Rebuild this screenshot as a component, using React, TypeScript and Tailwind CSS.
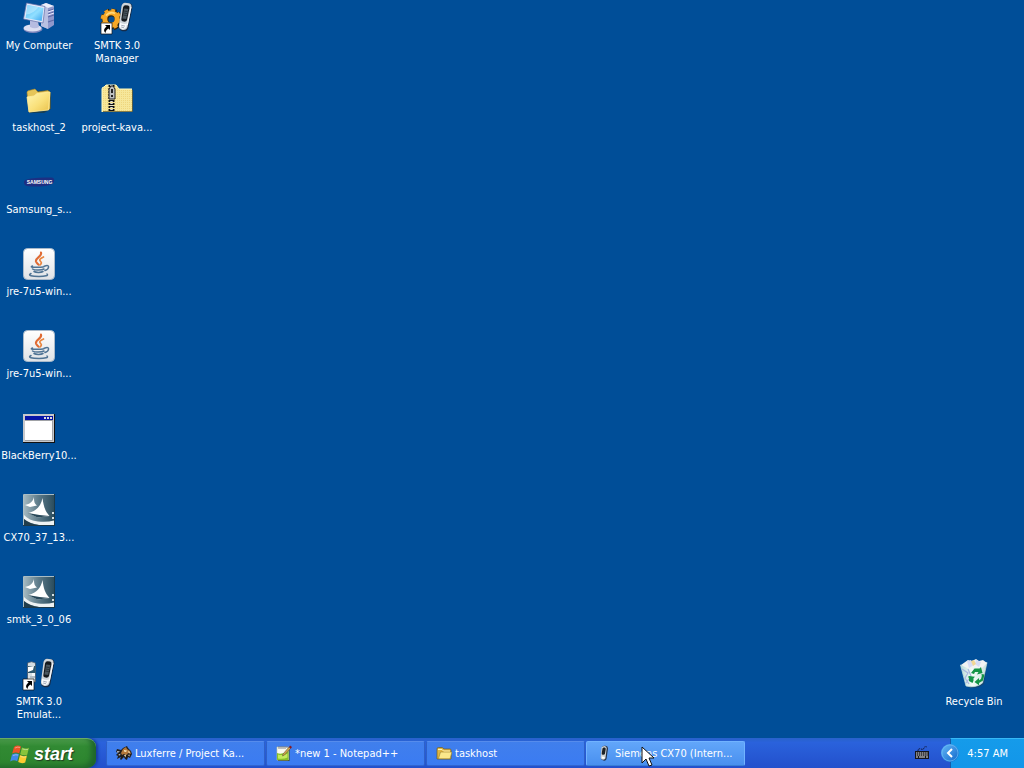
import type { ReactNode } from 'react';

function ShortcutArrow() {
  return (
    <g>
      <path d="M0 21h11v11H0z" fill="#fff" stroke="#111" strokeWidth=".7" />
      <path d="M4 23h5v5L7.4 26.4C5.4 27.8 4.7 29 4.5 31 2 28.5 3.2 26 5.6 24.7z" fill="#000" />
    </g>
  );
}

function Handset() {
  return (
    <g>
      <path d="M20.5 5Q21 1 24 .8l4.500.4Q32 2 31.300 6l-4 20.500Q26 30 21.500 29.200 17.500 28.300 18 24.500z" fill="#1c2436" opacity=".8" />
      <path d="M20.500 4Q21.300 1 24 .8l4 .4q3 .8 2.400 4.300L26.500 25q-1 3.500-5 2.900-4-.7-3.500-4.400z" fill="#cfd5da" />
      <path d="M22 5.500Q22.600 3.200 24.500 3.200l2.700.4q1.700.5 1.200 2.900L26 18q-.6 2-3.400 1.600-2.700-.5-2.200-2.900z" fill="#15191d" />
      <path d="m23.300 6.500 4 .6-2.100 10-3.800-.6z" fill="#4b575f" />
      <path d="m23 9 3.600.6m-4 1.400 3.600.6m-4 1.400 3.600.6" stroke="#222b31" strokeWidth=".8" />
      <path d="M19 20.500q3 2.200 7.200 1l-.9 3.200q-1 2.600-3.700 2.200-3-.6-2.900-3.200z" fill="#f7f9fb" />
      <path d="m20.300 23.300 3.600.8m-3.800.9 3 .8" stroke="#8c96a6" strokeWidth=".8" />
      <path d="M30 5 26.300 23" stroke="#fff" strokeWidth=".9" />
    </g>
  );
}

function ComputerIcon() {
  return (
    <svg viewBox="0 0 32 32" className="size-8" aria-hidden="true">
      <defs>
        <linearGradient id="screen" x1="0" y1="0" x2="1" y2="1">
          <stop stopColor="#48b5f6" /><stop offset=".55" stopColor="#91dfff" /><stop offset="1" stopColor="#38a3ee" />
        </linearGradient>
      </defs>
      <path d="m18 3 5-2 8 3v19l-6 4-7-3z" fill="#8f98cc" />
      <path d="m18 3 7 3v21l-7-3z" fill="#b9c0e2" />
      <path d="m18 3 5-2 8 3-6 2z" fill="#eceefa" />
      <path d="m25 9 6-2m-6 5 6-2m-6 5 6-2m-6 7 6-2" stroke="#5f6aa6" strokeWidth="1.200" />
      <path d="m25 10 6-2m-6 5 6-2" stroke="#e8eaff" />
      <ellipse cx="10" cy="27" rx="9.500" ry="4" fill="#7d86bc" />
      <ellipse cx="9.500" cy="26" rx="9" ry="3.600" fill="#dcdff2" />
      <path d="m7 18 8 1 1 6q-4 2.500-9 0z" fill="#b6bce0" />
      <path d="M3.500 1 22 4.500 20 21 .5 17z" fill="#e2e9fa" stroke="#626da6" strokeWidth=".7" />
      <path d="m4.500 3 16 3-1.800 13L2.500 16z" fill="url(#screen)" />
      <path d="m4.500 3 11 2.200Q10 12 3 12.500z" fill="#d2f3ff" opacity=".5" />
    </svg>
  );
}

function ManagerIcon() {
  return (
    <svg viewBox="0 0 32 32" className="size-8 overflow-visible" aria-hidden="true">
      <circle cx="10.500" cy="17.500" r="9.300" fill="none" stroke="#2b2210" strokeWidth="3.400" strokeDasharray="4.800 2.500" />
      <circle cx="10.500" cy="17.500" r="6.300" fill="none" stroke="#2b2210" strokeWidth="6.400" />
      <circle cx="10" cy="17" r="9" fill="none" stroke="#efa126" strokeWidth="2.600" strokeDasharray="3.900 3.170" />
      <circle cx="10" cy="17" r="6.200" fill="none" stroke="#f5a827" strokeWidth="5" />
      <path d="M5 13.500q4-4.500 9-2" fill="none" stroke="#ffd779" strokeWidth="1.800" />
      <Handset /><ShortcutArrow />
    </svg>
  );
}

function EmulatorIcon() {
  return (
    <svg viewBox="0 0 32 32" className="size-8 overflow-visible" aria-hidden="true">
      <path d="M4.500 5q4-2.500 8 0v19h-8z" fill="#d4dde2" stroke="#3b4c60" strokeWidth=".7" />
      <path d="M5 8h7.500v7H5z" fill="#2d566c" /><path d="m5 9 6-1-1 4-5 2z" fill="#fff" />
      <path d="M9 15h3v3H9z" fill="#f5f8fa" /><path d="M7 19h5" stroke="#8d9baa" />
      <Handset /><ShortcutArrow />
    </svg>
  );
}

function FolderShape() {
  return (
    <g>
      <defs>
        <linearGradient id="folder" x1="0" y1="0" x2="1" y2="1"><stop stopColor="#fff7b4" /><stop offset=".55" stopColor="#f9e07a" /><stop offset="1" stopColor="#e9c04a" /></linearGradient>
      </defs>
      <path d="M6 29 4 9q0-2 3-3l4-1 4 2 11-1 2 3v16l-7 4z" fill="#23352c" opacity=".6" />
      <path d="M4 8.500q0-2 3-2.200L12 5l3 3 10-1.500 2 2V25L6 28z" fill="#e6c558" stroke="#a98b30" strokeWidth=".6" />
      <path d="m4 13 7-1 3-2.500 13-1.500-1.500 18L6 28z" fill="url(#folder)" stroke="#ffeb9c" strokeWidth=".8" />
    </g>
  );
}

function FolderIcon() {
  return (
    <svg viewBox="0 0 32 32" className="size-8" aria-hidden="true"><FolderShape /></svg>
  );
}

function OpenFolderIcon() {
  return (
    <svg viewBox="0 0 16 16" className="size-4 shrink-0" aria-hidden="true">
      <path d="M1 14V4q0-1.500 1.500-1.500h3.700L8 4h6q1 0 1 1v9z" fill="#e0b644" stroke="#6e5c20" strokeWidth=".7" />
      <path d="M2.500 13.500 4.500 7H16l-2 6.800H2.500z" fill="#fbe88b" stroke="#9a7d28" strokeWidth=".6" />
      <path d="M2 4.500h4L7.500 6H14" fill="none" stroke="#fff5b8" />
    </svg>
  );
}

function ZipFolderIcon() {
  return (
    <svg viewBox="0 0 32 32" className="size-8" aria-hidden="true">
      <defs><pattern id="dither" width="2" height="2" patternUnits="userSpaceOnUse"><path fill="#f6e79a" d="M0 0h2v2H0z" /><path fill="#efd67e" d="M0 0h1v1H0z" /></pattern></defs>
      <path d="M1 28V5q0-2 2-2l2-2h10l3 4h13v23z" fill="url(#dither)" />
      <path d="M1 28V5q0-2 2-2l2-2h10l3 4h13" fill="none" stroke="#fff9bd" />
      <path d="M2 27.500h29.500V6" fill="none" stroke="#6b6132" strokeWidth=".8" />
      <path d="M10.500 1v26" stroke="#111" strokeWidth="6" strokeDasharray="2 1" />
      <path d="M10.500 1v26" stroke="#e2e2dc" strokeWidth="2.500" strokeDasharray="1 1" />
      <path d="m8 5 2-3h2l2 3v10H8z" fill="#bcbfc1" stroke="#222" />
      <path d="M10 5h2v4h-2zm0 6h2v2h-2z" fill="#222" />
    </svg>
  );
}

function SamsungIcon() {
  return (
    <svg viewBox="0 0 32 32" className="size-8" aria-hidden="true">
      <path d="M1 16.500q-1-3 7-4 10-1.500 20-1 4 0 3 4-1 3.500-9 4.500-10 1-18 0-3-1-3-3.500z" fill="#1d2f82" />
      <text x="16.500" y="17.500" textAnchor="middle" fill="#fff" fontFamily="Liberation Sans, sans-serif" fontWeight="bold" fontSize="5">SAMSUNG</text>
    </svg>
  );
}

function JavaIcon() {
  return (
    <svg viewBox="0 0 32 32" className="size-8" aria-hidden="true">
      <defs><linearGradient id="java-card" x2="0" y2="1"><stop stopColor="#fff" /><stop offset="1" stopColor="#dfe2e6" /></linearGradient></defs>
      <rect x=".5" y=".5" width="31" height="31" rx="4" fill="url(#java-card)" stroke="#a9b9ca" />
      <g fill="none" strokeLinecap="round">
        <path d="M18 4.500c1.500 4-6 5-5 9 .5 1.500 1.500 2 2.500 3.200" stroke="#df6a33" strokeWidth="2.100" />
        <path d="M20.500 9c-4.500 2-4.500 3-2.500 5 1 1 0 2-1 3" stroke="#e9853f" strokeWidth="1.700" />
        <path d="M9.500 18c-2.500 1-1 1.300 5.500 1.300 4 0 7-.6 6-1M9.500 21c2 1.400 9 1.400 11.500 0M11 23.500c2 1.200 7 1.200 9 0M8 25.500c-4 2 1 3 8 3 6 0 10-1 8-2.500M22 18c5-2 4.500 3 0 4.500" stroke="#4f7394" strokeWidth="1.500" />
      </g>
    </svg>
  );
}

function WindowIcon() {
  return (
    <svg viewBox="0 0 32 32" className="size-8" aria-hidden="true" shapeRendering="crispEdges">
      <path d="M0 2h32v29H0z" fill="#111" /><path d="M0 2h31v28H0z" fill="#c6c8cc" />
      <path d="M2 4h28v25H2z" fill="#a0a2a6" /><path d="M2 9h27v19H2z" fill="#fff" />
      <path d="M2 4h28v4H2z" fill="#0714a8" /><path d="M21 5h2v2h-2zm3 0h2v2h-2zm3 0h2v2h-2z" fill="#ddd" />
    </svg>
  );
}

function InstallerIcon() {
  return (
    <svg viewBox="0 0 32 32" className="size-8" aria-hidden="true">
      <defs><linearGradient id="install" x2="1"><stop stopColor="#a3b8c0" /><stop offset=".5" stopColor="#5b7988" /><stop offset="1" stopColor="#2b4d5e" /></linearGradient></defs>
      <path d="M0 0h32v32H0z" fill="#1b394a" /><path d="M1 1h30v30H1z" fill="url(#install)" />
      <path d="M.5 31V.5H31" fill="none" stroke="#a9bcc4" />
      <path d="M11 3c0 5 .5 6.500 3 8.500L7 13l-5-2c5-1 8-3.500 9-8z" fill="#fff" />
      <path d="M19.500 4c1 8 2.500 13 7 18l-12 1.500-9-4.500c8.500-2.500 12.500-7 14-15z" fill="#fff" />
      <path d="m5 19 9.500 4.500 12-1.500-10-1z" fill="#29495a" />
      <path d="M1 21q5 5.500 14 6.500 9 1 16-1V31H16Q6 29.500 1 25z" fill="#eef2f3" />
      <path d="M1 25q6 5 15 6H1z" fill="#203d4c" />
      <path d="M29 18h2v2h-2zm0 5h2v2h-2z" fill="#d6e0e4" />
    </svg>
  );
}

function RecycleIcon() {
  return (
    <svg viewBox="0 0 32 32" className="size-8" aria-hidden="true">
      <defs><linearGradient id="bin" x2="1"><stop stopColor="#b9dbd8" /><stop offset=".45" stopColor="#f3fcf8" /><stop offset="1" stopColor="#c8dfdc" /></linearGradient></defs>
      <path d="m5 8 24-3-3 21q-8 6-16 3z" fill="#1f3f5c" opacity=".6" />
      <path d="m2.500 7 13 3L29 4.500 24.500 25q-7 5.500-16.500 3z" fill="url(#bin)" stroke="#c9e2e1" strokeWidth=".7" />
      <path d="m3 7 7-5 3 1.500L18 1l3 2 4-1 4 3-6 6-8-1-4 1z" fill="#f1f3f3" />
      <path d="m9 3 4-1 3 5-5 3zm9-1 5 2-2 5-4-3z" fill="#d5dbf5" /><path d="m13 3 3-1 2 4-3 2z" fill="#f1d794" />
      <path d="m4 11 6 4-3 5 4 6M10 11l3 7-5 7" fill="none" stroke="#a9b8df" strokeWidth="1.200" />
      <g fill="#149447">
        <path d="m13 15 3.500-4.500h5L23 9l1.500 6L19 16.500l1.500-2.500H17l-1 2z" /><path d="m23.500 16 3 .5-1.500 6-4 2.500v2.300L16.500 24l4.500-4v2.300l2-1.300.8-3z" /><path d="m11 18 6 .8-1.500 1.400v2.500l-1 2.300-3.500-2v-3l-1-1z" />
      </g>
    </svg>
  );
}

function WindowsFlag() {
  return (
    <svg viewBox="0 0 20 20" className="size-5 shrink-0" aria-hidden="true">
      <path d="M4 3q3.500-2.500 7-.5L9.200 9.500Q6 7.500 2.200 9.500z" fill="#ee5428" /><path d="M12 3.500q3.500 2 7 .2l-1.800 7q-3.500 1.500-7-.5z" fill="#88c43b" />
      <path d="M2 10.500q3.700-2 7-.2l-1.800 6.900q-3.300-2-7 .2z" fill="#4289e8" /><path d="M10 11q3.500 2 7 .5l-1.800 7q-3.500 1.500-7-.5z" fill="#fccb30" />
      <path d="M5 4q3-1.500 5-.5M12.500 5q3 1 5.500.4M3 11.500q3-1.300 5-.4M10.500 12.500q3 1 5.500.4" stroke="#fff" opacity=".4" fill="none" />
    </svg>
  );
}

function BeastIcon() {
  return (
    <svg viewBox="0 0 16 16" className="size-4 shrink-0" aria-hidden="true">
      <path d="m1 4 4 1 2-2 4-2 1 2 3 3 1 3-2 4-2-1-1 3-2-1-1-2-3 3-1-1 1-2-4 2 1-3-2-1 2-2-2-1z" fill="#211e1c" />
      <path d="m7 4 3-2 1 2 3 2 1 3-3-1-1 2-3-1-2 1-1-2z" fill="#b5793a" />
      <path d="m8 5 3 .5L10 7 8 6.500zM12 6l2 1-1 1.500zM8 10l2-.5-.5 3zm4 0 1.500-.5v2z" fill="#f8e6bb" />
      <path d="m1 6 3 .5L1.500 8zm1 4 2.500-1.500L4 10.500z" fill="#c9ccd4" />
    </svg>
  );
}

function NotepadIcon() {
  return (
    <svg viewBox="0 0 16 16" className="size-4 shrink-0" aria-hidden="true">
      <path d="M2 3h11.500v13H2z" fill="#3f4a1f" /><path d="M1 2h11.500v13H1z" fill="#f9faee" stroke="#c3ccad" strokeWidth=".6" />
      <path d="M3 1v3m2-3v3m2-3v3m2-3v3m2-3v2" stroke="#646876" strokeWidth=".8" />
      <path d="M1 8q5 2 11.500-2v9H1z" fill="#86bf2a" /><path d="M2 9.500q5 1.500 9.500-1v4q-4 2-9.500 1z" fill="#c3ea5c" />
      <path d="m7 9 6-7 1.500 1.500-6 6.500-2 1z" fill="#d0a34b" stroke="#554831" strokeWidth=".5" /><path d="m13 2 1-1.500L16 2l-1.200 1.800z" fill="#8a1922" />
    </svg>
  );
}

function PhoneIcon() {
  return (
    <svg viewBox="0 0 16 16" className="size-4 shrink-0" aria-hidden="true">
      <path d="M6 2q1-1.500 3.500-1.200Q12 1 12 3.500L10.500 14Q10 16 7.500 15.600 5 15.200 5 13z" fill="#263246" />
      <path d="M5.500 2.500Q6.300 1 8.500 1q2.300.3 2.200 2.500L9.500 13.300q-.6 1.700-2.700 1.400Q4.600 14.300 4.700 12.500z" fill="#cdd3d6" />
      <path d="M6.500 3.500Q7 2.300 8.500 2.500t1.200 1.700L8.900 9Q8.500 10 7 9.800t-1.300-1.400z" fill="#1d2226" />
      <path d="m5.800 11.500 3 .4-.5 1.800-2.300-.3z" fill="#fff" />
    </svg>
  );
}

type DesktopEntry = { label: string; icon: ReactNode };

const firstColumn: DesktopEntry[] = [
  { label: 'My Computer', icon: <ComputerIcon /> },
  { label: 'taskhost_2', icon: <FolderIcon /> },
  { label: 'Samsung_s...', icon: <SamsungIcon /> },
  { label: 'jre-7u5-win...', icon: <JavaIcon /> },
  { label: 'jre-7u5-win...', icon: <JavaIcon /> },
  { label: 'BlackBerry10...', icon: <WindowIcon /> },
  { label: 'CX70_37_13...', icon: <InstallerIcon /> },
  { label: 'smtk_3_0_06', icon: <InstallerIcon /> },
  { label: 'SMTK 3.0\nEmulat...', icon: <EmulatorIcon /> },
];

const secondColumn: DesktopEntry[] = [
  { label: 'SMTK 3.0\nManager', icon: <ManagerIcon /> },
  { label: 'project-kava...', icon: <ZipFolderIcon /> },
];

function DesktopItem({ label, icon }: DesktopEntry) {
  return (
    <button type="button" className="flex h-[82px] w-[78px] flex-col items-center gap-[5px] pt-[2px] text-[11px] leading-[13px] text-white">
      {icon}
      <span className="whitespace-pre text-center">{label}</span>
    </button>
  );
}

function TaskButton({ label, icon, active = false }: DesktopEntry & { active?: boolean }) {
  return (
    <button
      type="button"
      aria-pressed={active}
      className={`relative flex h-[25px] w-[159px] shrink-0 items-center gap-[3px] rounded-[2px] border pl-[9px] text-left text-[11px] leading-[13px] text-white ${
        active
          ? 'border-[#71b3ff] border-b-[#387fd6] bg-linear-to-b from-[#62a6fa] to-[#4990ef]'
          : 'border-[#568cec] border-l-[#2e60c7] border-r-[#2e60c7] border-b-[#3265d0] bg-linear-to-b from-[#407fec] to-[#3b7bf2]'
      }`}
    >
      {icon}
      <span className="whitespace-pre">{label}</span>
      {active && (
        <svg viewBox="0 0 14 22" className="pointer-events-none absolute top-[4px] left-[54px] z-10 h-[22px] w-[14px]" aria-hidden="true">
          <path d="M1 1v16l4-4 3 7 3-1-3-7h5z" fill="#fff" stroke="#111" />
        </svg>
      )}
    </button>
  );
}

export default function App() {
  return (
    <div className="flex min-h-screen flex-col overflow-hidden bg-[#004e98] font-['DejaVu_Sans_Condensed','DejaVu_Sans',sans-serif]">
      <main className="flex flex-1">
        <div className="flex flex-col">{firstColumn.map((entry, index) => <DesktopItem key={index} {...entry} />)}</div>
        <div className="flex flex-col">{secondColumn.map((entry) => <DesktopItem key={entry.label} {...entry} />)}</div>
        <div className="mr-[11px] ml-auto self-end"><DesktopItem label="Recycle Bin" icon={<RecycleIcon />} /></div>
      </main>
      <footer className="flex h-[30px] items-stretch bg-linear-to-b from-[#2862ca] via-[#2a62dc] via-15% to-[#2350cc]">
        <button type="button" className="flex w-[96px] shrink-0 items-center gap-1 rounded-r-[9px] border-t border-[#67ac64] bg-linear-to-b from-[#4b9b4b] via-[#318a33] via-25% to-[#2c842e] pl-[10px] text-white shadow-[inset_-5px_-2px_5px_#20672b,2px_0_3px_#173c9e]">
          <WindowsFlag />
          <span className="font-['Liberation_Sans',sans-serif] text-[18px] leading-5 font-bold italic [text-shadow:1px_1px_1px_#203b20]">start</span>
        </button>
        <nav aria-label="Open windows" className="flex items-center gap-px pl-[10px]">
          <TaskButton label="Luxferre / Project Ka..." icon={<BeastIcon />} />
          <TaskButton label="*new 1 - Notepad++" icon={<NotepadIcon />} />
          <TaskButton label="taskhost" icon={<OpenFolderIcon />} />
          <TaskButton label="Siemens CX70 (Intern..." icon={<PhoneIcon />} active />
        </nav>
        <div className="ml-auto flex items-center">
          <button type="button" aria-label="Keyboard" className="mr-[20px]">
            <svg viewBox="0 0 16 16" className="size-4" aria-hidden="true">
              <path d="M4 6q0-3 3-2 2.500 1 3-1t3-1" fill="none" stroke="#111637" strokeDasharray="1.500 .7" />
              <path d="M1 6h14v8H1z" fill="#15151b" /><path d="M2 8h12M2 10h12" stroke="#eee" strokeWidth="1.200" strokeDasharray="1.300 .6" /><path d="M2 12h2m1 0h6m1 0h2" stroke="#eee" />
            </svg>
          </button>
          <div className="relative flex h-[30px] w-[74px] items-center justify-end border-t border-l border-t-[#37b8f5] border-l-[#155ba7] bg-linear-to-b from-[#159bea] to-[#1296e9] pr-4 text-[11px] leading-[13px] text-white">
            <button type="button" aria-label="Show hidden icons" className="absolute top-[5px] left-[-10px] size-[18px] rounded-full bg-linear-to-br from-[#64b9f9] to-[#0764c8]">
              <svg viewBox="0 0 18 18" className="size-full" aria-hidden="true"><circle cx="9" cy="9" r="8" fill="none" stroke="#69bdf3" strokeWidth=".7" /><path d="m11 5-4 4 4 4" fill="none" stroke="#fff" strokeWidth="2" /></svg>
            </button>
            <time>4:57 AM</time>
          </div>
        </div>
      </footer>
    </div>
  );
}
